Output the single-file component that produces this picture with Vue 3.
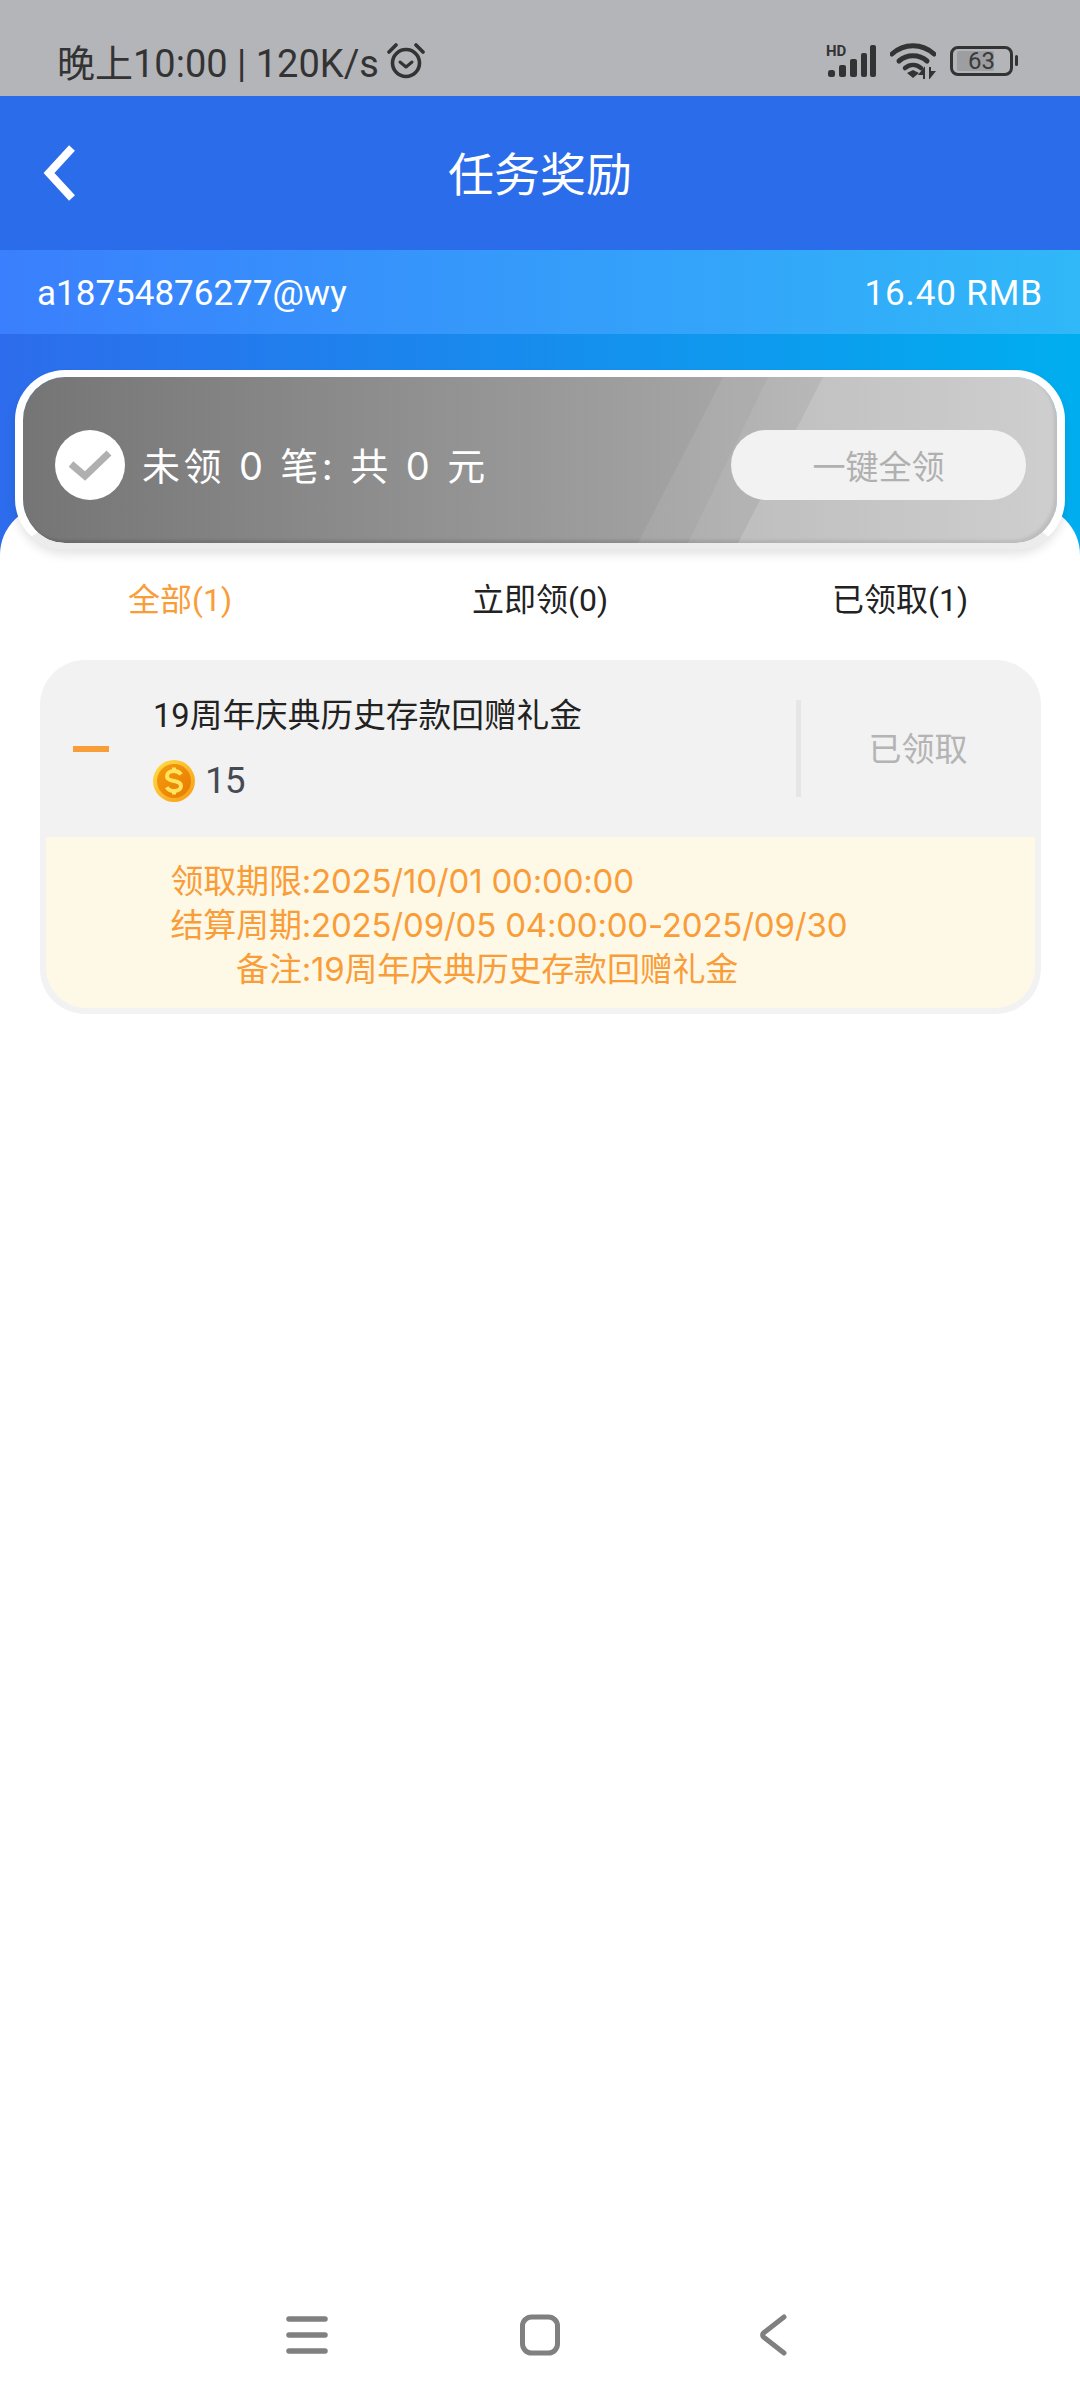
<template>
  <div class="page">
    <div class="status">
      <div class="status-left">
        <span>晚上10:00 | 120K/s</span>
        <svg class="alarm" viewBox="0 0 38 36" width="38" height="36">
          <circle cx="19" cy="20" r="13.5" fill="none" stroke="#333" stroke-width="3.6" />
          <path d="M13 19l6 5 6-5" fill="none" stroke="#333" stroke-width="3" stroke-linecap="round" stroke-linejoin="round" />
          <path d="M2 9 9 2M36 9l-7-7" fill="none" stroke="#333" stroke-width="3.6" stroke-linecap="round" />
        </svg>
      </div>
      <div class="status-right">
        <div class="signal">
          <span class="hd">HD</span>
          <svg viewBox="0 0 50 32" width="50" height="32">
            <rect x="2" y="25" width="7" height="7" rx="2.5" fill="#333" />
            <rect x="13" y="20" width="7" height="12" rx="2" fill="#333" />
            <rect x="24" y="14" width="7" height="18" rx="2" fill="#333" />
            <rect x="35" y="8" width="6" height="24" rx="2" fill="#333" />
            <rect x="44" y="0" width="6" height="32" rx="2" fill="#333" />
          </svg>
        </div>
        <svg class="wifi" viewBox="0 0 46 36" width="46" height="36">
          <path d="M2 11C14 0 32 0 44 11" fill="none" stroke="#333" stroke-width="5" stroke-linecap="round" />
          <path d="M9 18c8-7 20-7 28 0" fill="none" stroke="#333" stroke-width="5" stroke-linecap="round" />
          <path d="M15 25c5-4 11-4 16 0" fill="none" stroke="#333" stroke-width="4.5" stroke-linecap="round" />
          <path d="M17 30l6-3 6 3-6 5z" fill="#333" />
          <path d="M34 36V26l-4 5h4M40 24v10l4-5h-4" fill="#333" stroke="#333" stroke-width="2" />
        </svg>
        <div class="battery">
          <div class="battery-body">
            <span class="battery-level"></span>
            <span class="battery-num">63</span>
          </div>
          <span class="battery-nub"></span>
        </div>
      </div>
    </div>

    <div class="nav">
      <svg class="back" viewBox="0 0 34 56" width="34" height="56">
        <path d="M29 3 6 28l23 25" fill="none" stroke="#fff" stroke-width="8" />
      </svg>
      <h1>任务奖励</h1>
    </div>

    <div class="account">
      <span>a18754876277@wy</span>
      <span class="balance">16.40 RMB</span>
    </div>

    <div class="hero">
      <div class="summary">
        <svg class="streaks" viewBox="0 0 1034 166" preserveAspectRatio="none">
          <polygon points="615,166 700,0 1034,0 1034,166" fill="#fff" fill-opacity="0.08" />
          <polygon points="665,166 745,0 1034,0 1034,166" fill="#fff" fill-opacity="0.08" />
          <polygon points="715,166 800,0 1034,0 1034,166" fill="#fff" fill-opacity="0.16" />
        </svg>
        <div class="check">
          <svg viewBox="0 0 44 32" width="44" height="32">
            <path d="M3 15l14 12L41 4" fill="none" stroke="#b0b0b0" stroke-width="7" />
          </svg>
        </div>
        <span class="summary-text">未领 0 笔: 共 0 元</span>
        <button class="claim-all" type="button">一键全领</button>
      </div>
    </div>

    <div class="sheet">
      <div class="tabs">
        <span
          v-for="(tab, index) in tabs"
          :key="tab"
          :class="{ active: index === 0 }"
        >{{ tab }}</span>
      </div>

      <div class="item">
        <div class="item-head">
          <span class="dash"></span>
          <div class="item-main">
            <p class="item-title">19周年庆典历史存款回赠礼金</p>
            <div class="item-amount">
              <svg viewBox="0 0 42 42" width="42" height="42">
                <defs>
                  <linearGradient id="coinEdge" x1="0" y1="0" x2="1" y2="1">
                    <stop offset="0" stop-color="#ffe04a" />
                    <stop offset="1" stop-color="#f79a12" />
                  </linearGradient>
                  <linearGradient id="coinFace" x1="0" y1="0" x2="1" y2="1">
                    <stop offset="0" stop-color="#f59c0c" />
                    <stop offset="1" stop-color="#e87a04" />
                  </linearGradient>
                </defs>
                <circle cx="21" cy="21" r="21" fill="url(#coinEdge)" />
                <circle cx="21" cy="21" r="17" fill="url(#coinFace)" />
                <path d="M28 14.5c-1.500-2.500-4-3.500-7-3.500-4 0-7 2-7 5.200 0 3 2.500 4 7 4.800s7 2 7 5c0 3.200-3 5-7 5-3.200 0-5.800-1.200-7.300-3.800" fill="none" stroke="#ffe45c" stroke-width="4" />
                <path d="M21 7.500v4M21 30.500v4" stroke="#ffe45c" stroke-width="4" />
              </svg>
              <span>15</span>
            </div>
          </div>
          <span class="divider"></span>
          <span class="item-state">已领取</span>
        </div>
        <div class="item-meta">
          <div v-for="row in meta" :key="row.label" class="meta-row">
            <span class="meta-label">{{ row.label }}:</span>
            <span>{{ row.value }}</span>
          </div>
        </div>
      </div>
    </div>

    <div class="sysnav">
      <svg viewBox="0 0 60 60" width="60" height="60">
        <path d="M12 14h36M12 30h36M12 46h36" stroke="#808080" stroke-width="5.500" stroke-linecap="round" />
      </svg>
      <svg viewBox="0 0 60 60" width="60" height="60">
        <rect x="12.500" y="12" width="35" height="36" rx="9" fill="none" stroke="#808080" stroke-width="5" />
      </svg>
      <svg viewBox="0 0 60 60" width="60" height="60">
        <path d="M41 12 20.500 28c-1.200 1-1.200 3 0 4L41 48" fill="none" stroke="#808080" stroke-width="5" stroke-linecap="round" />
      </svg>
    </div>
  </div>
</template>

<script setup>
const tabs = ["全部(1)", "立即领(0)", "已领取(1)"];

const meta = [
  { label: "领取期限", value: "2025/10/01 00:00:00" },
  { label: "结算周期", value: "2025/09/05 04:00:00-2025/09/30" },
  { label: "备注", value: "19周年庆典历史存款回赠礼金" },
];
</script>

<style>
html,
body {
  margin: 0;
  background: #fff;
}
</style>

<style scoped>
.page {
  width: 1080px;
  height: 2400px;
  display: flex;
  flex-direction: column;
  font-family: Roboto, "Noto Sans CJK SC", sans-serif;
  overflow: hidden;
  background: #fff;
}
.status {
  height: 96px;
  background: #b4b5b9;
  color: #333;
  display: flex;
  justify-content: space-between;
  align-items: center;
  padding: 25px 62px 0 57px;
  box-sizing: border-box;
  flex-shrink: 0;
}
.status-left {
  display: flex;
  align-items: center;
  gap: 8px;
  font-size: 38px;
}
.status-right {
  display: flex;
  align-items: center;
  gap: 14px;
}
.signal {
  position: relative;
  width: 50px;
  height: 32px;
}
.hd {
  position: absolute;
  left: 0;
  top: -2px;
  font-size: 15px;
  line-height: 16px;
  font-weight: 700;
  color: #333;
}
.battery {
  display: flex;
  align-items: center;
  gap: 2px;
}
.battery-body {
  width: 63px;
  height: 30px;
  box-sizing: border-box;
  border: 3px solid #333;
  border-radius: 8px;
  position: relative;
  display: flex;
  align-items: center;
  justify-content: center;
}
.battery-level {
  position: absolute;
  left: 4px;
  top: 2px;
  bottom: 2px;
  width: 37px;
  border-radius: 2px;
  background: #9d9ea1;
}
.battery-num {
  position: relative;
  font-size: 24px;
  line-height: 24px;
  color: #3a3a3a;
}
.battery-nub {
  width: 3px;
  height: 11px;
  border-radius: 2px;
  background: #333;
}
.nav {
  height: 154px;
  background: #2a6cea;
  position: relative;
  display: flex;
  align-items: center;
  justify-content: center;
  flex-shrink: 0;
}
.back {
  position: absolute;
  left: 43px;
  top: 49px;
}
.nav h1 {
  margin: 0 0 5px;
  font-size: 46px;
  font-weight: 400;
  color: #fff;
}
.account {
  height: 84px;
  box-sizing: border-box;
  padding: 3px 37px 0;
  display: flex;
  justify-content: space-between;
  align-items: center;
  background: linear-gradient(90deg, #3a7ffd, #30b8f8);
  color: #fff;
  font-size: 35px;
  flex-shrink: 0;
}
.balance {
  letter-spacing: 0.9px;
}
.hero {
  height: 226px;
  background: linear-gradient(90deg, #2d6cec, #00aeef);
  padding: 36px 15px 0;
  box-sizing: border-box;
  flex-shrink: 0;
}
.summary {
  height: 179px;
  box-sizing: border-box;
  border: 8px solid #fff;
  border-top-width: 7px;
  border-bottom: 6px solid #ececec;
  border-radius: 50px;
  background: linear-gradient(90deg, #757575, #bcbcbc) padding-box;
  box-shadow: 0 6px 10px rgba(0, 0, 0, 0.1), inset -3px -3px 3px rgba(0, 0, 0, 0.12);
  position: relative;
  z-index: 1;
  overflow: hidden;
  display: flex;
  align-items: center;
  padding: 10px 31px 0 32px;
}
.streaks {
  position: absolute;
  inset: 0;
  width: 100%;
  height: 100%;
}
.check {
  width: 70px;
  height: 70px;
  border-radius: 50%;
  background: #fff;
  display: flex;
  align-items: center;
  justify-content: center;
  position: relative;
  flex-shrink: 0;
}
.summary-text {
  margin: 0 0 4px 17px;
  font-family: Inter, "Noto Sans CJK SC", sans-serif;
  font-size: 38px;
  letter-spacing: 3.4px;
  color: #fff;
  white-space: pre;
  position: relative;
}
.claim-all {
  margin-left: auto;
  width: 295px;
  height: 70px;
  border: none;
  border-radius: 35px;
  background: #f2f2f2;
  color: #b0b0b0;
  font-family: inherit;
  font-size: 33px;
  position: relative;
}
.sheet {
  flex: 1;
  margin-top: -55px;
  position: relative;
  background: #fff;
  border-radius: 50px 50px 0 0;
  padding: 75px 39px 0 40px;
}
.tabs {
  display: grid;
  grid-template-columns: repeat(3, 1fr);
  margin: 0 -39px 0 -40px;
  text-align: center;
  font-size: 32px;
  line-height: 40px;
  color: #222;
}
.tabs .active {
  color: #f99d38;
}
.item {
  margin-top: 40px;
  height: 354px;
  box-sizing: border-box;
  border-radius: 45px;
  background: #f2f2f2;
  padding: 0 6px 6px;
  display: flex;
  flex-direction: column;
}
.item-head {
  height: 177px;
  flex-shrink: 0;
  display: flex;
  align-items: center;
}
.dash {
  width: 36px;
  height: 6px;
  background: #f99d38;
  margin: 0 44px 0 27px;
  flex-shrink: 0;
}
.item-main {
  width: 643px;
  flex-shrink: 0;
}
.item-title {
  margin: 0 0 24px;
  font-size: 32.700px;
  line-height: 40px;
  color: #222;
}
.item-amount {
  display: flex;
  align-items: center;
  gap: 10px;
  height: 42px;
  font-size: 37px;
  letter-spacing: -1px;
  color: #454a55;
}
.divider {
  width: 5px;
  height: 97px;
  background: #e6e6e6;
  flex-shrink: 0;
}
.item-state {
  flex: 1;
  text-align: center;
  font-size: 33px;
  line-height: 44px;
  padding-top: 2px;
  color: #b4b4b4;
}
.item-meta {
  flex: 1;
  background: #fef8e7;
  border-radius: 0 0 40px 40px;
  padding-top: 22px;
  color: #f99d38;
  font-family: Inter, "Noto Sans CJK SC", sans-serif;
  font-size: 33px;
  letter-spacing: -0.2px;
  line-height: 44px;
}
.meta-row {
  display: flex;
}
.meta-label {
  width: 265px;
  text-align: right;
  flex-shrink: 0;
}
.sysnav {
  height: 130px;
  display: flex;
  justify-content: center;
  align-items: center;
  gap: 173px;
  flex-shrink: 0;
}
</style>
